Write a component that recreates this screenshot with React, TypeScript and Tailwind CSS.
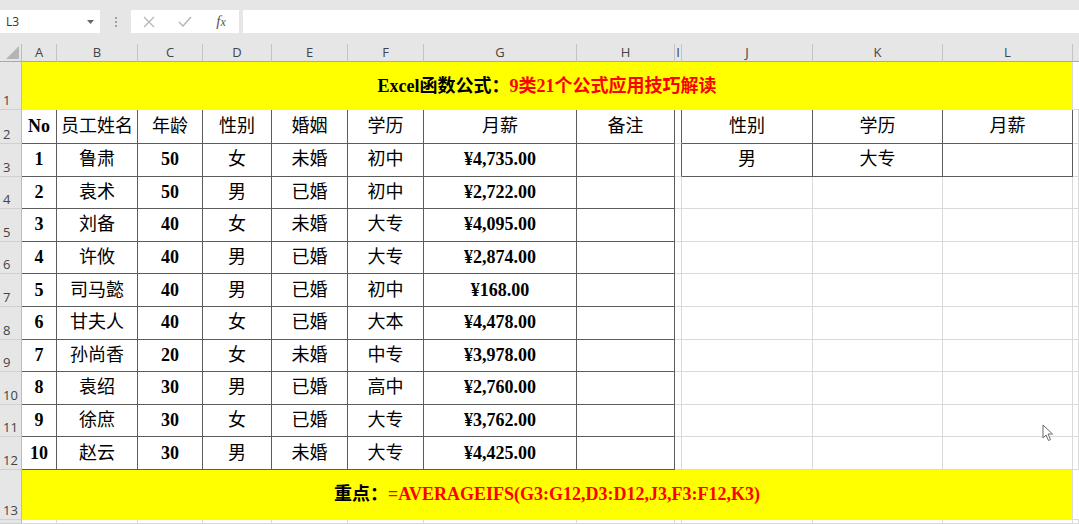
import React from 'react';

const COLS = ['A', 'B', 'C', 'D', 'E', 'F', 'G', 'H', 'I', 'J', 'K', 'L'];

const HEAD = ['No', '员工姓名', '年龄', '性别', '婚姻', '学历', '月薪', '备注'];

const ROWS: string[][] = [
  ['1', '鲁肃', '50', '女', '未婚', '初中', '¥4,735.00', ''],
  ['2', '袁术', '50', '男', '已婚', '初中', '¥2,722.00', ''],
  ['3', '刘备', '40', '女', '未婚', '大专', '¥4,095.00', ''],
  ['4', '许攸', '40', '男', '已婚', '大专', '¥2,874.00', ''],
  ['5', '司马懿', '40', '男', '已婚', '初中', '¥168.00', ''],
  ['6', '甘夫人', '40', '女', '已婚', '大本', '¥4,478.00', ''],
  ['7', '孙尚香', '20', '女', '未婚', '中专', '¥3,978.00', ''],
  ['8', '袁绍', '30', '男', '已婚', '高中', '¥2,760.00', ''],
  ['9', '徐庶', '30', '女', '已婚', '大专', '¥3,762.00', ''],
  ['10', '赵云', '30', '男', '未婚', '大专', '¥4,425.00', ''],
];

const RIGHT: string[][] = [
  ['性别', '学历', '月薪'],
  ['男', '大专', ''],
];

const serif = "font-['Liberation_Serif','Noto_Sans_CJK_SC',serif]";
const ui = "font-['Open_Sans','Noto_Sans',sans-serif]";

// value of a cell at sheet row r (1-based), column c (0 = A ... 11 = L, 12 = M)
function cellText(r: number, c: number): string {
  if (r === 2 && c <= 7) return HEAD[c];
  if (r >= 3 && r <= 12 && c <= 7) return ROWS[r - 3][c];
  if (r >= 2 && r <= 3 && c >= 9 && c <= 11) return RIGHT[r - 2][c - 9];
  return '';
}

const isAscii = (s: string) => /^[\x20-\x7E¥]+$/.test(s);

function Cell({ r, c }: { r: number; c: number }) {
  const inMain = r >= 2 && r <= 12 && c <= 7;
  const inRight = r >= 2 && r <= 3 && c >= 9 && c <= 11;
  const darkRight = inMain || inRight || (c === 8 && r >= 2 && r <= 3);
  const darkBottom = inMain || inRight;
  const text = cellText(r, c);
  return (
    <div
      className={`flex items-center justify-center overflow-hidden whitespace-nowrap bg-white border-r border-b text-[18px] text-black ${serif} ${
        darkRight ? 'border-r-[#5c5c5c]' : 'border-r-[#dadada]'
      } ${darkBottom ? 'border-b-[#5c5c5c]' : 'border-b-[#dadada]'} ${
        isAscii(text) ? 'font-bold' : 'font-normal'
      }`}
    >
      {text}
    </div>
  );
}

function RowHead({ n }: { n: number }) {
  return (
    <div
      className={`flex items-end pl-[3px] pb-[1px] bg-[#e6e6e6] border-r border-b border-r-[#bcbcbc] border-b-[#d0d0d0] text-[13px] leading-[16px] text-[#444] ${ui}`}
    >
      {n <= 13 ? n : ''}
    </div>
  );
}

function Banner({ black, red }: { black: string; red: string }) {
  return (
    <div
      className={`col-span-12 flex items-center justify-center bg-[#ffff00] border-r border-r-[#dadada] text-[18px] font-bold ${serif}`}
    >
      <span className="text-black">{black}</span>
      <span className="text-[#ff0000]">{red}</span>
    </div>
  );
}

function Cursor() {
  return (
    <svg className="absolute left-[1042px] top-[424px]" width="12" height="18" viewBox="0 0 12 18">
      <path
        d="M1 1 L1 14 L4 11 L6.5 16.5 L8.5 15.5 L6 10 L10.5 10 Z"
        fill="#ffffff"
        stroke="#6b6b6b"
        strokeWidth="1"
        strokeLinejoin="round"
      />
    </svg>
  );
}

function FormulaBar() {
  return (
    <div className={`flex h-[44px] items-start bg-[#e6e6e6] pt-[10px] ${ui}`}>
      <div className="flex h-[23px] w-[100px] items-center justify-between bg-white pl-[6px] pr-[6px] text-[12px] text-[#333]">
        <span>L3</span>
        <svg width="7" height="4" viewBox="0 0 7 4">
          <path d="M0 0 L7 0 L3.5 4 Z" fill="#666" />
        </svg>
      </div>
      <div className="flex h-[23px] w-[31px] flex-col items-center justify-center gap-[2px]">
        <span className="h-[2px] w-[2px] bg-[#a0a0a0]" />
        <span className="h-[2px] w-[2px] bg-[#a0a0a0]" />
        <span className="h-[2px] w-[2px] bg-[#a0a0a0]" />
      </div>
      <div className="flex h-[23px] w-[108px] items-center bg-white">
        <div className="flex w-[36px] justify-center">
          <svg width="12" height="12" viewBox="0 0 12 12">
            <path d="M1 1 L11 11 M11 1 L1 11" stroke="#b4b4b4" strokeWidth="1.2" />
          </svg>
        </div>
        <div className="flex w-[36px] justify-center">
          <svg width="14" height="11" viewBox="0 0 14 11">
            <path d="M1 6 L5 10 L13 1" stroke="#b4b4b4" strokeWidth="1.4" fill="none" />
          </svg>
        </div>
        <div className="flex w-[36px] justify-center">
          <span className="font-['Liberation_Serif',serif] text-[15px] italic text-[#555]">
            f<span className="text-[12px]">x</span>
          </span>
        </div>
      </div>
      <div className="ml-[4px] h-[23px] flex-1 bg-white" />
    </div>
  );
}

export default function App() {
  const rows = Array.from({ length: 14 }, (_, i) => i + 1);
  return (
    <div className="relative h-[524px] w-[1079px] overflow-hidden bg-white">
      <FormulaBar />
      <div className="grid h-[480px] grid-cols-[22px_35px_81px_65px_69px_76px_76px_153px_98px_7px_131px_130px_130px_1fr] grid-rows-[18px_48px_34px_repeat(10,32.6px)_50px_1fr] overflow-hidden">
        {/* corner */}
        <div className="relative bg-[#e6e6e6] border-r border-b border-r-[#bcbcbc] border-b-[#a8a8a8]">
          <svg className="absolute right-[2px] bottom-[2px]" width="13" height="13" viewBox="0 0 13 13">
            <path d="M13 0 L13 13 L0 13 Z" fill="#b5b5b5" />
          </svg>
        </div>
        {COLS.map((c) => (
          <div
            key={c}
            className={`flex items-center justify-center overflow-hidden bg-[#e6e6e6] border-r border-b border-r-[#c4c4c4] border-b-[#a8a8a8] text-[13px] text-[#444] ${ui}`}
          >
            {c}
          </div>
        ))}
        <div className="bg-[#e6e6e6] border-b border-b-[#a8a8a8]" />

        {rows.map((r) => {
          if (r === 1 || r === 13) {
            return (
              <React.Fragment key={r}>
                <RowHead n={r} />
                {r === 1 ? (
                  <Banner black="Excel函数公式：" red="9类21个公式应用技巧解读" />
                ) : (
                  <Banner black="重点：" red="=AVERAGEIFS(G3:G12,D3:D12,J3,F3:F12,K3)" />
                )}
                <div className="bg-white border-b border-b-[#dadada]" />
              </React.Fragment>
            );
          }
          return (
            <React.Fragment key={r}>
              <RowHead n={r} />
              {Array.from({ length: 13 }, (_, c) => (
                <Cell key={c} r={r} c={c} />
              ))}
            </React.Fragment>
          );
        })}
      </div>
      <Cursor />
    </div>
  );
}
